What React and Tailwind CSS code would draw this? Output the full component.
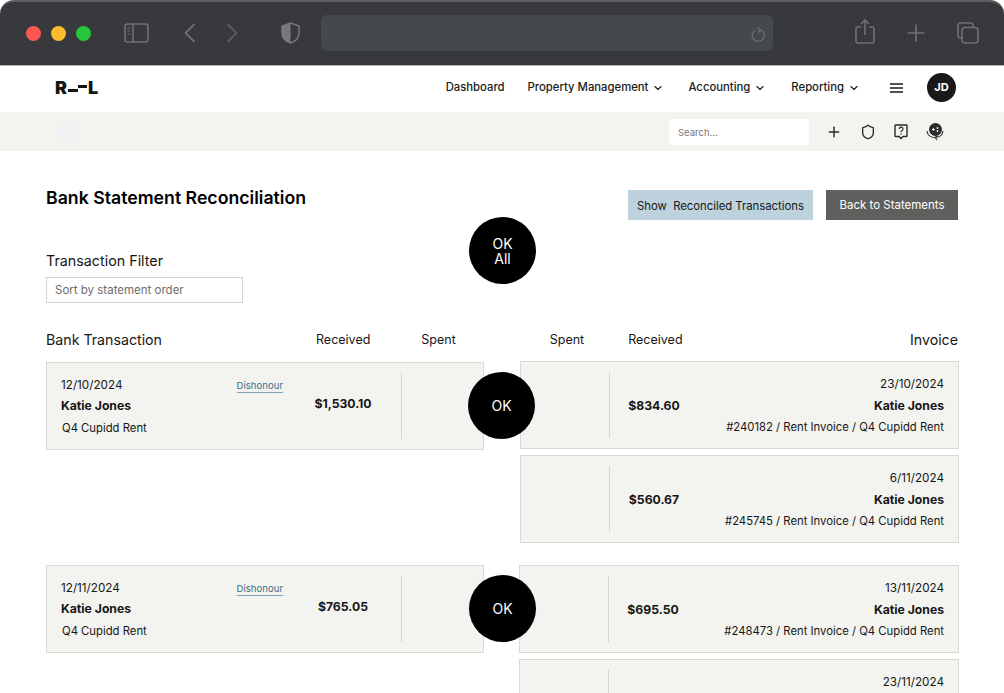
import { ChevronDown, Plus, Shield } from "lucide-react";

const font = { fontFamily: "Inter, 'Noto Sans', sans-serif" };

function ChromeBar() {
  return (
    <div className="h-[66px] shrink-0 flex items-center pb-px bg-[#38393d] rounded-t-[14px] border-t-2 border-b border-t-[#5c5d60] border-b-[#b5b6b8]">
      <div className="flex items-center gap-[10px] ml-[25.5px] w-[83px]">
        <span className="w-[15px] h-[15px] shrink-0 rounded-full bg-[#fc5753]" />
        <span className="w-[15px] h-[15px] shrink-0 rounded-full bg-[#fdbc2e]" />
        <span className="w-[15px] h-[15px] shrink-0 rounded-full bg-[#27c840]" />
      </div>
      <svg className="ml-[15px]" width="25" height="20" viewBox="0 0 25 20" fill="none" stroke="#6f7072" strokeWidth="1.6">
        <rect x="1" y="1" width="23" height="18" rx="2.5" />
        <path d="M9 1v18" />
        <path d="M3.5 5h3M3.5 8h3M3.5 11h3" strokeWidth="1.2" />
      </svg>
      <svg className="ml-[35px]" width="12" height="20" viewBox="0 0 12 20" fill="none" stroke="#6f7072" strokeWidth="1.8">
        <path d="M10.5 1 1.5 10l9 9" />
      </svg>
      <svg className="ml-[30px]" width="12" height="20" viewBox="0 0 12 20" fill="none" stroke="#5d5e61" strokeWidth="1.8">
        <path d="M1.5 1l9 9-9 9" />
      </svg>
      <svg className="ml-[43px]" width="19" height="22" viewBox="0 0 19 22" fill="none">
        <path d="M9.5 1 1 4v7c0 5 3.6 8.4 8.5 10V1z" fill="#77787a" />
        <path d="M9.5 1 18 4v7c0 5-3.6 8.4-8.5 10C4.600 19.400 1 16 1 11V4l8.500-3z" stroke="#77787a" strokeWidth="1.5" />
      </svg>
      <div className="ml-[21px] w-[452px] h-[36px] rounded-[6px] bg-[#46494c] flex items-center justify-end pr-[7px]">
        <svg width="15" height="16" viewBox="0 0 15 16" fill="none" stroke="#6b6d70" strokeWidth="1.3" className="mt-[3px]">
          <path d="M9.500 2.800A6 6 0 1 1 4.500 3" />
          <path d="M6.500 0.500 9.500 2.800 7 5.500" />
        </svg>
      </div>
      <svg className="ml-[82px] mb-[3px]" width="20" height="25" viewBox="0 0 20 25" fill="none" stroke="#6f7072" strokeWidth="1.6">
        <path d="M6 8H3a2 2 0 0 0-2 2v12a2 2 0 0 0 2 2h14a2 2 0 0 0 2-2V10a2 2 0 0 0-2-2h-3" />
        <path d="M10 16V1.500M6 5l4-4 4 4" />
      </svg>
      <svg className="ml-[32px]" width="18" height="18" viewBox="0 0 18 18" fill="none" stroke="#6f7072" strokeWidth="1.7">
        <path d="M9 0.500v17M0.500 9h17" />
      </svg>
      <svg className="ml-[32px]" width="22" height="22" viewBox="0 0 22 22" fill="none" stroke="#6f7072" strokeWidth="1.6">
        <path d="M5 16H3.500A2.500 2.500 0 0 1 1 13.500v-10A2.500 2.500 0 0 1 3.500 1h10A2.500 2.500 0 0 1 16 3.500V5" />
        <rect x="5" y="5.500" width="16" height="15.500" rx="3" />
      </svg>
    </div>
  );
}

function NavItem({ label }) {
  return (
    <span className="flex items-center gap-[4px] text-[#1a1a1a]">
      {label}
      <ChevronDown size={12} strokeWidth={2.2} />
    </span>
  );
}

function TopNav() {
  return (
    <div className="h-[46px] shrink-0 bg-white flex items-center pb-[3px] pl-[55px] pr-[48px] text-[11.3px] font-medium">
      <div className="flex items-center text-[#161616] text-[18px] font-black leading-none">
        <span>R</span>
        <span className="w-[10px] h-[3px] bg-[#161616] mt-[5px] ml-px" />
        <span className="w-[9px] h-[3px] bg-[#161616] mb-[3px]" />
        <span className="ml-px">L</span>
      </div>
      <div className="ml-auto flex items-center text-[#1a1a1a]">
        <span>Dashboard</span>
        <span className="ml-[23px]"><NavItem label="Property Management" /></span>
        <span className="ml-[24px]"><NavItem label="Accounting" /></span>
        <span className="ml-[25px]"><NavItem label="Reporting" /></span>
        <svg className="ml-[30px]" width="13" height="10" viewBox="0 0 13 10" fill="none" stroke="#1a1a1a" strokeWidth="1.4">
          <path d="M0 1h13M0 5h13M0 9h13" />
        </svg>
        <span className="ml-[24px] w-[29px] h-[29px] rounded-full bg-[#191919] text-white font-bold text-[11px] flex items-center justify-center">JD</span>
      </div>
    </div>
  );
}

function ToolBar() {
  return (
    <div className="h-[39px] shrink-0 bg-[#f3f4ef] flex items-center pl-[56px]">
      <span className="w-[22px] h-[22px] rounded-full bg-[#f1f2f3]" />
      <div className="ml-[591px] w-[140px] h-[26px] bg-white rounded-[2px] flex items-center pl-[9px] pt-[3px] text-[9.5px] text-[#77787a]">
        Search...
      </div>
      <Plus className="ml-[17px] text-[#2a2a2a]" size={16} strokeWidth={2.2} />
      <Shield className="ml-[18px] text-[#2a2a2a]" size={16} strokeWidth={2} />
      <svg className="ml-[18px]" width="14" height="16" viewBox="0 0 14 16" fill="none" stroke="#2a2a2a" strokeWidth="1.4">
        <path d="M1.500 1h11a.5.5 0 0 1 .5.5v10.500a.5.5 0 0 1-.5.5H9L7 14.500 5 12.500H1.500A.5.5 0 0 1 1 12V1.500a.5.5 0 0 1 .5-.5z" />
        <path d="M5.200 5a1.900 1.900 0 1 1 2.600 1.800c-.6.300-.8.600-.8 1.400M7 9.500v1.200" strokeWidth="1.200" />
      </svg>
      <svg className="ml-[18px]" width="18" height="18" viewBox="0 0 18 18" fill="none">
        <circle cx="9.500" cy="6.500" r="6.500" fill="#2a2a2a" />
        <path d="M6 6.500h2.800M7.400 5.100v2.800" stroke="#f3f4ef" strokeWidth="1" />
        <circle cx="11.500" cy="5" r=".9" fill="#f3f4ef" />
        <circle cx="11.500" cy="8" r=".9" fill="#f3f4ef" />
        <path d="M1 8c.5 4 3.500 6.500 8 6.500s7.500-2.500 8-6.500M9 14.500l2.500-1.500M9 14.500l2.200 2.500" stroke="#2a2a2a" strokeWidth="1.100" />
      </svg>
    </div>
  );
}

function OkButton({ className, children }) {
  return (
    <button className={"absolute w-[67px] h-[67px] rounded-full bg-black text-white text-[14px] leading-[15px] flex items-center justify-center text-center " + className}>
      {children}
    </button>
  );
}

function BankCard({ date, amount, first }) {
  return (
    <div className={(first ? "mt-px " : "") + "h-[88px] bg-[#f3f4f0] border border-[#d9d9d6] flex items-center pl-[14px]"}>
      <div className="w-[222px] text-[#161616]">
        <div className="flex items-start justify-between">
          <span className="text-[11.7px] leading-[16px]">{date}</span>
          <span className="text-[9.6px] leading-[13px] mt-[2px] text-[#3d6f8a] border-b border-[#7fa3b6]">Dishonour</span>
        </div>
        <div className="text-[12.2px] font-bold leading-[16px] mt-[5px]">Katie Jones</div>
        <div className="text-[11.3px] leading-[16px] mt-[6px] pl-px">Q4 Cupidd Rent</div>
      </div>
      <div className="w-[118px] pl-[2px] pb-[4px] text-center text-[12.2px] font-bold text-[#161616]">{amount}</div>
      <div className="w-px h-[66px] bg-[#d4d4d1]" />
    </div>
  );
}

function InvoiceCard({ date, amount, name, ref_no }) {
  return (
    <div className="h-[88px] bg-[#f3f4f0] border border-[#d9d9d6] flex items-center pl-[88px] pr-[14px]">
      <div className="w-px h-[66px] bg-[#d4d4d1]" />
      <div className="w-[88px] pt-[2px] text-center text-[12.2px] font-bold text-[#161616]">{amount}</div>
      <div className="flex-1 text-right text-[#161616]">
        <div className="text-[11.7px] leading-[16px]">{date}</div>
        <div className="text-[12.2px] font-bold leading-[16px] min-h-[16px] mt-[6px]">{name}</div>
        <div className="text-[11.3px] leading-[16px] min-h-[16px] mt-[5px]">{ref_no}</div>
      </div>
    </div>
  );
}

const rows = [
  {
    date: "12/10/2024",
    amount: "$1,530.10",
    invoices: [
      { date: "23/10/2024", amount: "$834.60", name: "Katie Jones", ref_no: "#240182 / Rent Invoice / Q4 Cupidd Rent" },
      { date: "6/11/2024", amount: "$560.67", name: "Katie Jones", ref_no: "#245745 / Rent Invoice / Q4 Cupidd Rent" },
    ],
  },
  {
    date: "12/11/2024",
    amount: "$765.05",
    invoices: [
      { date: "13/11/2024", amount: "$695.50", name: "Katie Jones", ref_no: "#248473 / Rent Invoice / Q4 Cupidd Rent" },
      { date: "23/11/2024", amount: "", name: "", ref_no: "" },
    ],
  },
];

export default function App() {
  return (
    <div className="w-[1004px] h-[693px] overflow-hidden flex flex-col bg-white" style={font}>
      <ChromeBar />
      <TopNav />
      <ToolBar />
      <div className="relative flex-1 pl-[46px] pr-[46px]">
        <OkButton className="left-[469px] top-[66px]">OK<br />All</OkButton>
        <div className="flex items-start mt-[39px]">
          <h1 className="text-[17.7px] font-semibold leading-[16px] text-black">Bank Statement Reconciliation</h1>
          <button className="ml-auto w-[185px] h-[30px] pt-[2px] bg-[#bdd2dd] text-[#161616] text-[11.3px] whitespace-pre">Show  Reconciled Transactions</button>
          <button className="ml-[13px] w-[132px] h-[30px] pt-[2px] bg-[#5f5f5d] text-white text-[11.5px]">Back to Statements</button>
        </div>
        <div className="text-[14.3px] leading-[18px] mt-[32px] text-[#161616]">Transaction Filter</div>
        <div className="mt-[7px] w-[197px] h-[26px] pt-[2px] border border-[#d4d4d4] flex items-center pl-[8px] text-[11.5px] text-[#6d6d6d]">
          Sort by statement order
        </div>
        <div className="flex items-center mt-[27px] h-[20px] text-[#161616] text-[12.5px]">
          <span className="text-[14.2px] w-[270px]">Bank Transaction</span>
          <span>Received</span>
          <span className="ml-[51px]">Spent</span>
          <span className="ml-[94px]">Spent</span>
          <span className="ml-[44px]">Received</span>
          <span className="ml-auto text-[14.2px]">Invoice</span>
        </div>
        <div className="mt-[11px] flex flex-col gap-[22px]">
          {rows.map((row, i) => (
            <div key={row.date} className="relative grid grid-cols-[438px_439px] gap-x-[36px]">
              <OkButton className={i === 0 ? "left-[422px] top-[11px]" : "left-[423px] top-[10px]"}>OK</OkButton>
              <div><BankCard date={row.date} amount={row.amount} first={i === 0} /></div>
              <div className={(i === 1 ? "-ml-px " : "") + "flex flex-col gap-[6px]"}>
                {row.invoices.map((inv) => (
                  <InvoiceCard key={inv.date} {...inv} />
                ))}
              </div>
            </div>
          ))}
        </div>
      </div>
    </div>
  );
}
